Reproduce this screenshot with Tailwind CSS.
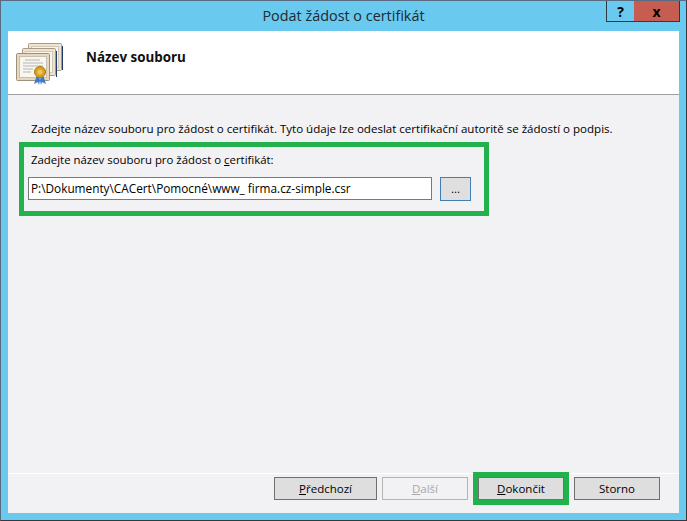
<!DOCTYPE html>
<html lang="cs">
<head>
  <meta charset="UTF-8">
  <title>Podat žádost o certifikát</title>
  <script src="https://cdn.jsdelivr.net/npm/@tailwindcss/browser@4"></script>
</head>
<body class="bg-white">
  <div class="relative w-[687px] h-[521px] flex flex-col border border-[#5a6a80] border-r-[#33393f] border-b-[#33393f] bg-[#69c9ee] font-['Open_Sans','Noto_Sans',sans-serif] text-[11.5px] text-black overflow-hidden">
    <!-- Title bar -->
    <div class="h-[30px] shrink-0 text-center text-[14.4px] leading-[30px] text-[#1c2a33]">Podat žádost o certifikát</div>
    <div class="absolute top-0 right-[6px] flex h-[21px]">
      <div class="w-[28px] border-l border-b border-[#2b3a44] flex items-center justify-center font-bold text-[14px]">?</div>
      <div class="w-[46px] bg-[#c75c50] border-r border-b border-[#2b3a44] flex items-center justify-center font-bold text-[14px]">x</div>
    </div>

    <!-- Dialog content -->
    <div class="mx-[7px] mb-[7px] flex-1 flex flex-col bg-[#f2f1f3]">
      <!-- Header -->
      <div class="h-[64px] shrink-0 bg-white border-b border-[#a0a0a0] flex">
        <svg class="ml-[8px] mt-[11px] w-[48px] h-[44px]" viewBox="0 0 48 44">
          <rect x="12.5" y="1.5" width="33" height="27" rx="1" fill="#f0e4d0" stroke="#a89a86"/>
          <rect x="15.5" y="4.5" width="27" height="21" fill="#f8f6f1" stroke="#d0c8b8"/>
          <path d="M46.5 4v24" stroke="#223a6a"/>
          <rect x="6.5" y="6.5" width="33" height="27" rx="1" fill="#efe2cd" stroke="#a89a86"/>
          <rect x="9.5" y="9.5" width="27" height="21" fill="#f8f6f1" stroke="#d0c8b8"/>
          <path d="M40.5 9v26" stroke="#223a6a"/>
          <rect x="0.5" y="11.5" width="33" height="27" rx="1" fill="#e8d6bd" stroke="#a08f78"/>
          <rect x="3.5" y="14.5" width="27" height="21" fill="#f8f6f1" stroke="#c8bfae"/>
          <path d="M9 18h15M7 21h20M7 24h20M7 27h10M7 30h8" stroke="#b5b5b0"/>
          <path d="M21 33l-3 9 4-2 1 3 2-9zM27 33l3 9-4-2-1 3-2-9z" fill="#3f78c8"/>
          <circle cx="24" cy="30" r="5.5" fill="#d9a21f" stroke="#a87a12"/>
          <circle cx="24" cy="30" r="2.5" fill="#eec453"/>
        </svg>
        <div class="ml-[22px] mt-[17px] font-bold text-[13.4px] leading-[18px] text-[#101010]">Název souboru</div>
      </div>

      <!-- Body -->
      <div class="flex-1 pt-[26px] pl-[11px]">
        <p class="pl-[12px] leading-[16px] h-[21px] text-[11.55px] whitespace-nowrap">Zadejte název souboru pro žádost o certifikát. Tyto údaje lze odeslat certifikační autoritě se žádostí o podpis.</p>
        <div class="w-[470px] h-[74px] border-[5px] border-[#22b14c] pl-[4px] pt-[5px]">
          <label class="block leading-[16px] pl-[3px] text-[11.4px]">Zadejte název souboru pro žádost o <span class="underline">c</span>ertifikát:</label>
          <div class="mt-[9px] flex gap-[8px]">
            <div class="w-[404px] h-[23px] bg-white border border-[#7a7a7a] pl-[2px] leading-[21px] text-[11.8px] whitespace-nowrap">P:\Dokumenty\CACert\Pomocné\www_ firma.cz-simple.csr</div>
            <button class="w-[31px] h-[24px] bg-[#dfdfdf] border border-[#3f7fb5] leading-[22px]">...</button>
          </div>
        </div>
      </div>

      <!-- Footer -->
      <div class="h-[40px] shrink-0 border-t border-white pt-[3px] pl-[266px] flex items-start">
        <button class="w-[103px] h-[23px] bg-[#dedede] border border-[#707070]"><span class="underline">P</span>ředchozí</button>
        <button class="ml-[5px] w-[86px] h-[23px] bg-[#f2f1f3] border border-[#b5b5b5] text-[#a8a8a8]"><span class="underline">D</span>alší</button>
        <div class="ml-[5px] -mt-[5px] w-[96px] h-[33px] border-[5px] border-[#22b14c]">
          <button class="block w-full h-[23px] bg-[#dedede] border border-[#707070]"><span class="underline">D</span>okončit</button>
        </div>
        <button class="ml-[5px] w-[86px] h-[23px] bg-[#dedede] border border-[#707070]">Storno</button>
      </div>
    </div>
  </div>
</body>
</html>
